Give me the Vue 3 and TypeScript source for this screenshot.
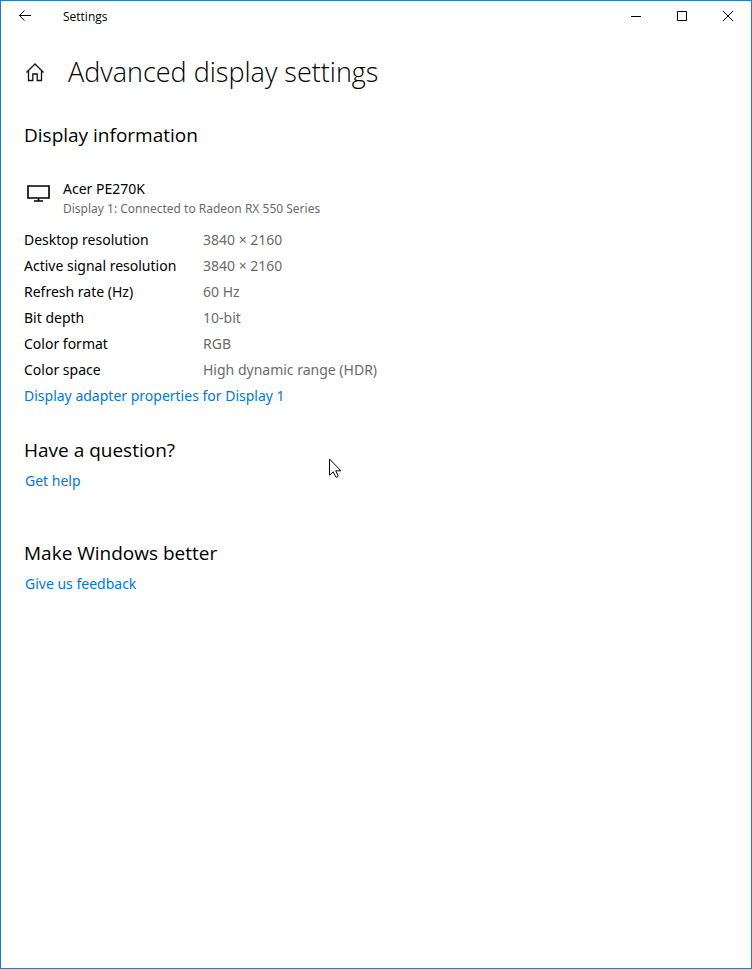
<script setup lang="ts">
interface Property {
  label: string
  value: string
}

const properties: Property[] = [
  { label: 'Desktop resolution', value: '3840 × 2160' },
  { label: 'Active signal resolution', value: '3840 × 2160' },
  { label: 'Refresh rate (Hz)', value: '60 Hz' },
  { label: 'Bit depth', value: '10-bit' },
  { label: 'Color format', value: 'RGB' },
  { label: 'Color space', value: 'High dynamic range (HDR)' },
]
</script>

<template>
  <div class="window">
    <header class="titlebar">
      <button class="back" type="button" aria-label="Back">
        <svg width="16" height="16" viewBox="0 0 16 16"><path d="M14 7.5H2.5M7.5 2.5l-5 5 5 5" /></svg>
      </button>
      <span class="title">Settings</span>
      <button class="control" type="button" aria-label="Minimize">
        <svg width="12" height="12" viewBox="0 0 12 12"><path d="M1 6.5h10" /></svg>
      </button>
      <button class="control" type="button" aria-label="Maximize">
        <svg width="12" height="12" viewBox="0 0 12 12"><path d="M1.5 1.5h9v9h-9z" /></svg>
      </button>
      <button class="control" type="button" aria-label="Close">
        <svg width="12" height="12" viewBox="0 0 12 12"><path d="M1 1l10 10M11 1L1 11" /></svg>
      </button>
    </header>

    <main class="content">
      <div class="heading">
        <button class="home" type="button" aria-label="Home">
          <svg width="22" height="20" viewBox="0 0 22 20"><path d="M2.5 10.5L11 2l8.5 8.5M4.5 9v9.5h4.3V12h4.4v6.5h4.3V9" /></svg>
        </button>
        <h1>Advanced display settings</h1>
      </div>

      <section class="information">
        <h2>Display information</h2>
        <div class="device">
          <svg class="monitor" width="28" height="28" viewBox="0 0 28 28"><path d="M4 7h21v12H4zM14.5 19v3M10 22h9" /></svg>
          <div>
            <div class="device-name">Acer PE270K</div>
            <div class="device-note">Display 1: Connected to Radeon RX 550 Series</div>
          </div>
        </div>
        <dl class="properties">
          <div v-for="p in properties" :key="p.label" class="property">
            <dt>{{ p.label }}</dt>
            <dd>{{ p.value }}</dd>
          </div>
        </dl>
        <a href="#">Display adapter properties for Display 1</a>
      </section>

      <section class="help">
        <h2>Have a question?</h2>
        <a href="#">Get help</a>
      </section>

      <section class="feedback">
        <h2>Make Windows better</h2>
        <a href="#">Give us feedback</a>
      </section>
    </main>

    <svg class="cursor" width="14" height="21" viewBox="0 0 14 21">
      <path d="M1.5 1v16.3l3.7-3.5 2.7 5.2c.7.5 2 0 2.3-1L7.8 12.800h5.100z" />
    </svg>
  </div>
</template>

<style>
body {
  margin: 0;
}
</style>

<style scoped>
.window {
  box-sizing: border-box;
  position: relative;
  min-height: 100vh;
  border: 1px solid #1a7fd4;
  background: #fff;
  color: #000;
  font: 14px/20px "Noto Sans", "Open Sans", sans-serif;
}
svg {
  display: block;
  flex: none;
  fill: none;
  stroke: #000;
}
button {
  display: flex;
  align-items: center;
  justify-content: center;
  padding: 0;
  border: 0;
  background: none;
}
.titlebar {
  display: flex;
  height: 30px;
}
.back {
  width: 48px;
}
.title {
  flex: 1;
  padding-left: 14px;
  font-family: "Open Sans", "Noto Sans", sans-serif;
  font-size: 12px;
  line-height: 32px;
}
.control {
  width: 46px;
}
.content {
  padding: 21px 23px;
}
.heading {
  display: flex;
  align-items: center;
  gap: 22px;
  height: 40px;
}
.home svg {
  stroke: #111;
  stroke-width: 1.3;
}
h1,
h2,
dl,
dd {
  margin: 0;
}
h1 {
  font-family: "Open Sans", "Noto Sans", sans-serif;
  font-size: 27px;
  font-weight: 350;
  line-height: 40px;
}
h2 {
  font-family: "Open Sans", "Noto Sans", sans-serif;
  font-size: 19px;
  font-weight: 400;
  line-height: 28px;
}
.information {
  margin-top: 29px;
}
.device {
  display: flex;
  gap: 11px;
  margin-top: 30px;
}
.monitor {
  stroke-width: 1.6;
}
.device-note {
  color: #6b6b6b;
  font-size: 12px;
}
.properties {
  margin-top: 8px;
}
.property {
  display: flex;
  line-height: 26px;
}
dt {
  width: 179px;
}
dd {
  color: #6b6b6b;
}
a {
  display: block;
  width: fit-content;
  color: #0078d7;
  text-decoration: none;
  line-height: 26px;
}
.help {
  margin-top: 27px;
}
.feedback {
  margin-top: 45px;
}
.help a,
.feedback a {
  margin: 4px 1px 0;
}
.cursor {
  position: absolute;
  left: 327px;
  top: 457px;
}
.cursor path {
  fill: #fff;
}
</style>
